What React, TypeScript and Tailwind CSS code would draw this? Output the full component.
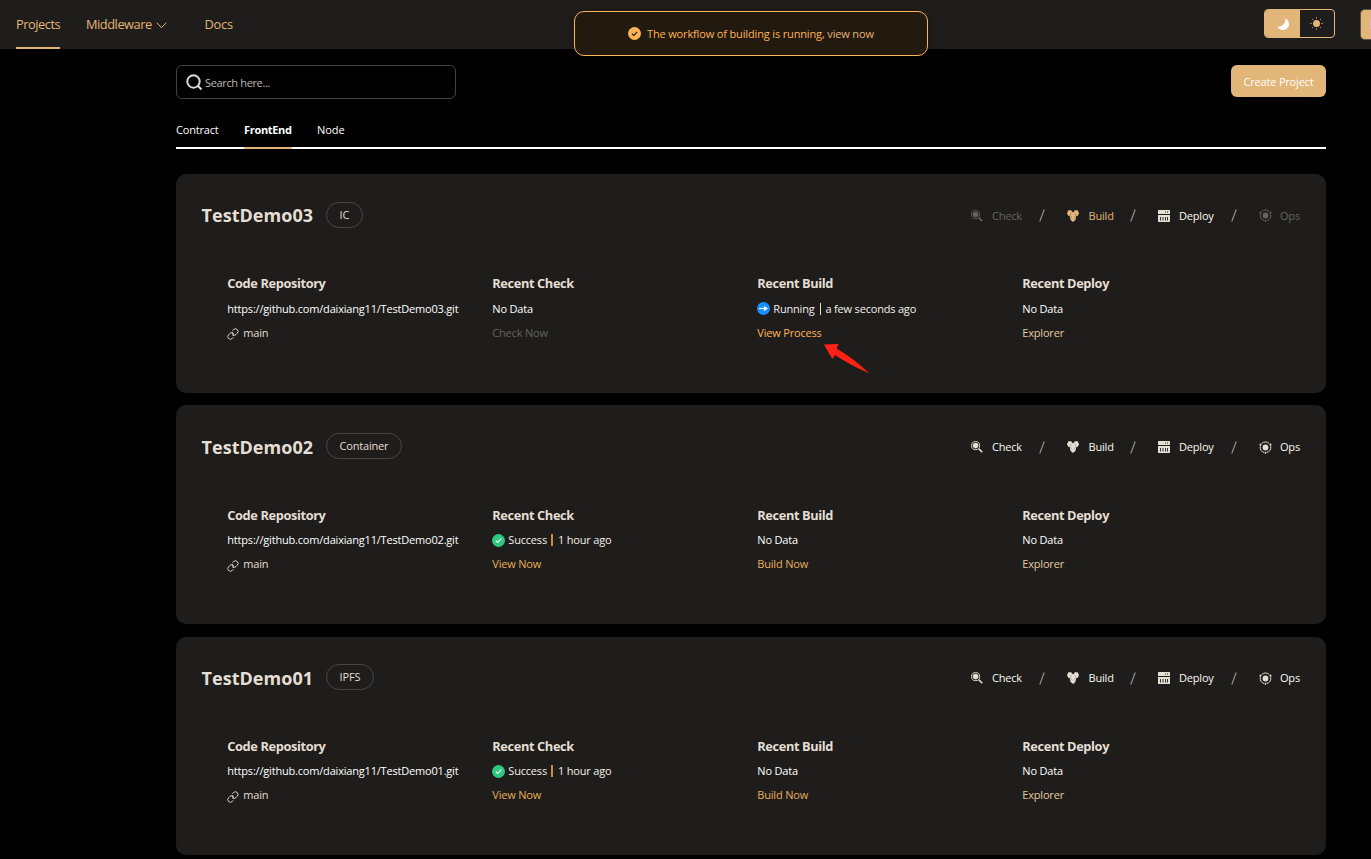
import React from "react";

type Tone = "normal" | "muted" | "gold";
type Status = { kind: "success" | "running"; time: string } | null;

interface Project {
  name: string;
  type: string;
  check: Status;
  checkLink: { label: string; muted?: boolean };
  build: Status;
  buildLink: string;
  tones: [Tone, Tone, Tone, Tone];
}

const projects: Project[] = [
  {
    name: "TestDemo03",
    type: "IC",
    check: null,
    checkLink: { label: "Check Now", muted: true },
    build: { kind: "running", time: "a few seconds ago" },
    buildLink: "View Process",
    tones: ["muted", "gold", "normal", "muted"],
  },
  {
    name: "TestDemo02",
    type: "Container",
    check: { kind: "success", time: "1 hour ago" },
    checkLink: { label: "View Now" },
    build: null,
    buildLink: "Build Now",
    tones: ["normal", "normal", "normal", "normal"],
  },
  {
    name: "TestDemo01",
    type: "IPFS",
    check: { kind: "success", time: "1 hour ago" },
    checkLink: { label: "View Now" },
    build: null,
    buildLink: "Build Now",
    tones: ["normal", "normal", "normal", "normal"],
  },
];

const toneClass: Record<Tone, string> = {
  normal: "text-[#e4ded4]",
  muted: "text-[#65635f]",
  gold: "text-[#e2b578]",
};

function CheckIcon() {
  return (
    <svg width="12" height="12" viewBox="0 0 13 13" fill="none" stroke="currentColor">
      <circle cx="5" cy="5" r="4.4" strokeWidth="1" />
      <circle cx="5" cy="5" r="3" fill="currentColor" stroke="none" />
      <path d="M8.4 8.4 12.2 12" strokeWidth="1.7" />
    </svg>
  );
}

function BuildIcon() {
  return (
    <svg width="12" height="12" viewBox="0 0 12 12" fill="currentColor">
      <path d="M1.3.3h2.9l1.5 2.2V4L4.2 6H1.5L0 3.2z" />
      <path d="M10.700.3H7.800L6.300 2.500V4l1.500 2h2.700L12 3.200z" />
      <path d="M4.500 2.200h3l2 3.300-1.100 4.500L6 12l-2.400-2-1.100-4.500z" />
      <path d="M4.400 2.700 3.200 5.600l1.700 2.800M7.600 2.700l1.200 2.900-1.700 2.800" fill="none" stroke="#1e1d1b" strokeOpacity=".5" strokeWidth=".5" />
    </svg>
  );
}

function DeployIcon() {
  return (
    <svg width="12" height="12" viewBox="0 0 12 12" fill="currentColor">
      <path d="M.4 0h11.200L12 .5V4H0V.5z" />
      <path d="M0 5h12v6.500l-.4.500H.4L0 11.500z" />
      <path d="M7 2h1M9 2h1" stroke="#1e1d1b" strokeWidth="1" />
      <path d="M2.500 7v3.500M5 7v3.500M7.500 7v3.500M9.500 7v3.500" stroke="#1e1d1b" strokeWidth=".9" />
    </svg>
  );
}

function OpsIcon() {
  return (
    <svg width="13" height="13" viewBox="0 0 13 13" fill="none" stroke="currentColor">
      <circle cx="6.500" cy="6.500" r="2.900" fill="currentColor" stroke="none" />
      <path d="M2.700 2.600a5.200 5.200 0 0 1 7.600 0M11.700 5.300a5.200 5.200 0 0 1-3.800 6.200M5.100 11.500a5.200 5.200 0 0 1-3.800-6.200" />
      <circle cx="1.500" cy="3.800" r=".7" fill="currentColor" />
      <circle cx="11.500" cy="3.800" r=".7" fill="currentColor" />
      <circle cx="6.500" cy="11.800" r=".6" fill="currentColor" />
    </svg>
  );
}

function SuccessIcon() {
  return (
    <svg width="13" height="13" viewBox="0 0 13 13" className="shrink-0">
      <circle cx="6.500" cy="6.500" r="6.500" fill="#2dc880" />
      <path d="m3.700 6.600 2 1.900 3.600-3.800" fill="none" stroke="#fff" strokeWidth="1.200" />
    </svg>
  );
}

function RunningIcon() {
  return (
    <svg width="13" height="13" viewBox="0 0 13 13" className="shrink-0">
      <circle cx="6.500" cy="6.500" r="6.500" fill="#1890ff" />
      <path d="M2 6.500h6" stroke="#fff" strokeWidth="1.200" />
      <path d="M7 3.900 11 6.500 7 9.100z" fill="#fff" />
    </svg>
  );
}

function LinkIcon() {
  return (
    <svg width="12" height="12" viewBox="0 0 12 12" fill="none" stroke="#d8d4cc" strokeLinecap="round" className="mt-[3px] shrink-0">
      <path d="M5.600 2.400 6.500 1.600a2.600 2.600 0 0 1 3.800 3.600L8.900 6.700a2.300 2.300 0 0 1-3.400-.2 1.800 1.800 0 0 1 .1-2.100" />
      <path d="M6.200 9.600 5.300 10.400a2.600 2.600 0 0 1-3.800-3.600L2.900 5.300a2.300 2.300 0 0 1 3.400.2 1.800 1.800 0 0 1-.1 2.100" />
    </svg>
  );
}

function Action({ label, tone, icon }: { label: string; tone: Tone; icon: React.ReactNode }) {
  return (
    <div className={`flex items-center ${toneClass[tone]}`}>
      <span className="w-[21.500px] shrink-0">{icon}</span>
      <span className={tone === "normal" ? "text-[#fbf8f2]" : ""}>{label}</span>
    </div>
  );
}

function Slash() {
  return (
    <svg width="6" height="13" viewBox="0 0 6 13" className="self-center">
      <path d="M5.200.5.800 12.500" stroke="#8c8982" strokeWidth="1.300" />
    </svg>
  );
}

function StatusLine({ status }: { status: Status }) {
  if (!status) return <span>No Data</span>;
  const success = status.kind === "success";
  return (
    <div className="flex items-center text-[#f4f0e9]">
      {success ? <SuccessIcon /> : <RunningIcon />}
      <span className="ml-[3px]">{success ? "Success" : "Running"}</span>
      <span className={success ? "ml-[4px] mr-[5px] h-[12px] w-[2px] bg-[#c98f3c]" : "ml-[5px] mr-[5px] h-[12px] w-px bg-[#e4ded4]"} />
      <span>{status.time}</span>
    </div>
  );
}

function Column({ title, children }: { title: string; children: React.ReactNode }) {
  return (
    <div className="w-[265px] shrink-0 whitespace-nowrap">
      <h3 className="h-[25.600px] text-[12.800px] font-bold leading-[25px] tracking-[-0.380px] text-[#e4ded4]">{title}</h3>
      {children}
    </div>
  );
}

function ProjectCard({ project }: { project: Project }) {
  const [check, build, deploy, ops] = project.tones;
  const line = "flex h-6 items-center text-white";
  const link = "flex h-6 items-center";
  return (
    <article className="h-[218.600px] shrink-0 rounded-[10px] bg-[#1e1d1b] px-[25px]">
      <div className="flex h-[83.600px] items-center justify-between">
        <div className="flex items-center">
          <h2 className="w-[125px] whitespace-nowrap pl-[0.500px] text-[18px] font-bold tracking-[0.040px] text-[#e4ded4]">{project.name}</h2>
          <span className="-mt-[2px] flex h-[26px] items-center rounded-full border border-[#484745] px-[12.600px] text-[#e4ded4]">
            {project.type}
          </span>
        </div>
        <div className="grid grid-cols-[68px_28.500px_62.500px_28px_73.500px_27.500px_42.500px] items-center whitespace-nowrap">
          <Action label="Check" tone={check} icon={<CheckIcon />} />
          <Slash />
          <Action label="Build" tone={build} icon={<BuildIcon />} />
          <Slash />
          <Action label="Deploy" tone={deploy} icon={<DeployIcon />} />
          <Slash />
          <Action label="Ops" tone={ops} icon={<OpsIcon />} />
        </div>
      </div>
      <div className="flex pl-[26.300px] pt-[13.600px]">
        <Column title="Code Repository">
          <div className={line}>{`https://github.com/daixiang11/${project.name}.git`}</div>
          <div className={`${link} gap-[4px] text-[#e4ded4]`}>
            <LinkIcon />
            main
          </div>
        </Column>
        <Column title="Recent Check">
          <div className={line}><StatusLine status={project.check} /></div>
          <a className={`${link} ${project.checkLink.muted ? "text-[#65635f]" : "text-[#e9ae5b]"}`}>{project.checkLink.label}</a>
        </Column>
        <Column title="Recent Build">
          <div className={line}><StatusLine status={project.build} /></div>
          <a className={`${link} ${project.build ? "text-[#ffb359]" : "text-[#e9ae5b]"}`}>{project.buildLink}</a>
        </Column>
        <Column title="Recent Deploy">
          <div className={line}>No Data</div>
          <a className={`${link} text-[#e2c8a0]`}>Explorer</a>
        </Column>
      </div>
    </article>
  );
}

export default function App() {
  return (
    <div className="relative flex h-[859px] w-[1371px] flex-col overflow-hidden bg-black font-['Open_Sans',sans-serif] text-[11px] tracking-[-0.190px] text-white">
      <header className="flex h-[49px] shrink-0 items-center overflow-hidden bg-[#1e1d1b] pl-4 text-[12.800px] tracking-[-0.450px] text-[#e2b578]">
        <a className="flex h-full w-[44px] items-center whitespace-nowrap border-b-2 border-[#e2b578] pt-[2px]">Projects</a>
        <a className="ml-[26px] flex w-[118.500px] items-center gap-[4px] whitespace-nowrap">
          Middleware
          <svg width="11" height="7" viewBox="0 0 11 7" fill="none" stroke="currentColor" className="mt-[2px]">
            <path d="m.700.700 4.800 5 4.800-5" />
          </svg>
        </a>
        <a className="tracking-[-0.200px]">Docs</a>
        <div className="mb-[2px] ml-auto mr-[25px] flex h-[29px] w-[71px] shrink-0 overflow-hidden rounded-[4px] border border-[#e2b578]">
          <div className="flex w-[35px] items-center justify-center bg-[#e2b578]">
            <svg width="12" height="12" viewBox="0 0 12 12" fill="#fff">
              <path d="M8 .4A6 6 0 1 1 .4 8.200 6.300 6.300 0 0 0 8 .4" />
            </svg>
          </div>
          <div className="flex flex-1 items-center justify-center pr-[2px]">
            <svg width="13" height="13" viewBox="0 0 13 13" fill="currentColor" stroke="currentColor">
              <circle cx="6.500" cy="6.500" r="3.500" stroke="none" />
              <path d="M6.500.300v1.200M6.500 11.500v1.200M.300 6.500h1.200M11.500 6.500h1.200M2.100 2.100l.8.800M10.100 10.100l.8.800M10.900 2.100l-.8.800M2.900 10.100l-.8.800" />
            </svg>
          </div>
        </div>
        <div className="mb-px flex h-[31px] w-[11px] shrink-0 items-center justify-end rounded-l-[5px] border border-r-0 border-[#55514b] bg-[#e2b578]">
          <span className="h-[9px] w-px bg-[#e3b5cf]" />
        </div>
      </header>

      <main className="flex flex-col pl-[176px] pr-[45px]">
        <div className="mt-4 flex h-[34px] items-start justify-between">
          <div className="flex h-[34px] w-[280px] items-center rounded-[6px] border border-[#444341] pl-[9px]">
            <svg width="17" height="17" viewBox="0 0 17 17" fill="none" stroke="#dedad2" strokeWidth="2">
              <circle cx="7.500" cy="7.500" r="6.200" />
              <path d="m12 12 3.500 3.500" />
            </svg>
            <span className="ml-[2px] mt-[3px] tracking-[-0.350px] text-[#bebab4]">Search here...</span>
          </div>
          <button className="h-8 w-[95px] whitespace-nowrap rounded-[6px] bg-[#e2b578] pt-[2px] text-white">Create Project</button>
        </div>
        <nav className="mt-[15px] flex h-[35px] border-b-2 border-white">
          <a className="flex h-[35px] w-[68px] items-center pb-[3px]">Contract</a>
          <a className="flex h-[35px] w-[48px] items-center whitespace-nowrap border-b-2 border-[#e2b578] pb-px font-bold tracking-[-0.320px]">FrontEnd</a>
          <a className="ml-[25px] flex h-[35px] items-center pb-[3px] tracking-[-0.080px]">Node</a>
        </nav>
        <div className="mt-[25.200px] flex flex-col gap-[12.600px]">
          {projects.map((project) => (
            <ProjectCard key={project.name} project={project} />
          ))}
        </div>
      </main>

      <div className="absolute left-[574px] top-[11px] flex h-[45px] w-[354px] items-center rounded-[10px] border border-[#ffb359] bg-[#22190f] pl-[53px] tracking-[-0.150px] text-[#ffb359] shadow-[0_4px_14px_rgba(0,0,0,0.25)]">
        <svg width="13" height="13" viewBox="0 0 13 13">
          <circle cx="6.500" cy="6.500" r="6.500" fill="#ffb359" />
          <path d="m3.900 6.600 1.900 1.800 3.400-3.600" fill="none" stroke="#22190f" strokeWidth="1.200" />
        </svg>
        <span className="ml-[6px] mt-[2px] whitespace-pre">The workflow of building is running, <a className="text-[#e2b578]">view now</a></span>
      </div>

      <svg className="absolute left-[823px] top-[343px]" width="48" height="32" viewBox="0 0 48 32" fill="#ff2113">
        <path d="M1 1.500 15.500 1 13.500 5.500Q30 15 46.500 30.500 27 22 12 12L9.300 16z" />
      </svg>
    </div>
  );
}
